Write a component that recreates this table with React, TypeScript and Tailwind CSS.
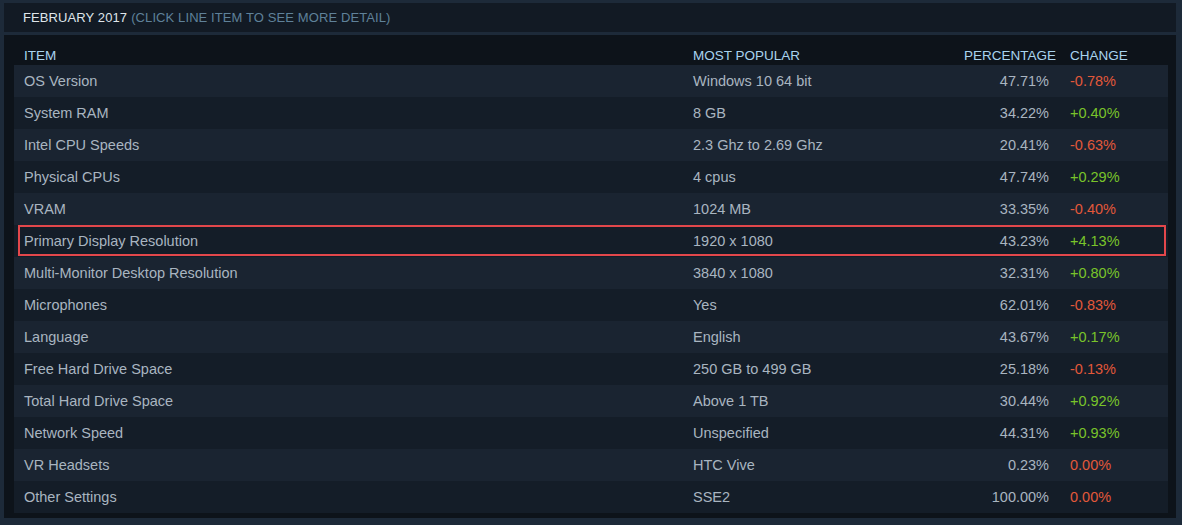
import React from "react";

type Row = {
  item: string;
  popular: string;
  pct: string;
  change: string;
  highlight?: boolean;
};

const rows: Row[] = [
  { item: "OS Version", popular: "Windows 10 64 bit", pct: "47.71%", change: "-0.78%" },
  { item: "System RAM", popular: "8 GB", pct: "34.22%", change: "+0.40%" },
  { item: "Intel CPU Speeds", popular: "2.3 Ghz to 2.69 Ghz", pct: "20.41%", change: "-0.63%" },
  { item: "Physical CPUs", popular: "4 cpus", pct: "47.74%", change: "+0.29%" },
  { item: "VRAM", popular: "1024 MB", pct: "33.35%", change: "-0.40%" },
  { item: "Primary Display Resolution", popular: "1920 x 1080", pct: "43.23%", change: "+4.13%", highlight: true },
  { item: "Multi-Monitor Desktop Resolution", popular: "3840 x 1080", pct: "32.31%", change: "+0.80%" },
  { item: "Microphones", popular: "Yes", pct: "62.01%", change: "-0.83%" },
  { item: "Language", popular: "English", pct: "43.67%", change: "+0.17%" },
  { item: "Free Hard Drive Space", popular: "250 GB to 499 GB", pct: "25.18%", change: "-0.13%" },
  { item: "Total Hard Drive Space", popular: "Above 1 TB", pct: "30.44%", change: "+0.92%" },
  { item: "Network Speed", popular: "Unspecified", pct: "44.31%", change: "+0.93%" },
  { item: "VR Headsets", popular: "HTC Vive", pct: "0.23%", change: "0.00%" },
  { item: "Other Settings", popular: "SSE2", pct: "100.00%", change: "0.00%" },
];

export default function App() {
  return (
    <div
      className="w-[1182px] h-[525px] bg-[#1d2a39] pl-[4px] pr-[6px] pt-[3px] pb-[7px] flex flex-col"
      style={{ fontFamily: '"Liberation Sans", Arial, sans-serif' }}
    >
      {/* title bar */}
      <div className="h-[29px] bg-[#121a24] flex items-center pl-[19px] text-[13px] tracking-[0.1px]">
        <span className="text-[#dfe5ea]">FEBRUARY 2017</span>
        <span className="text-[#5f8199] ml-[4px]">(CLICK LINE ITEM TO SEE MORE DETAIL)</span>
      </div>
      <div className="h-[3px]" />

      {/* table */}
      <div className="flex-1 bg-[#0d131a] pl-[10px] pr-[8px] pt-[10px]">
        <div className="h-[20px] flex items-center pt-[2px] text-[13.5px] text-[#a9d3ef]">
          <div className="w-[679px] pl-[10px]">ITEM</div>
          <div className="flex-1">MOST POPULAR</div>
          <div className="w-[120px] text-right pr-[1px]">PERCENTAGE</div>
          <div className="w-[111px] pl-[13px]">CHANGE</div>
        </div>
        {rows.map((r, i) => (
          <div
            key={r.item}
            className={
              "relative h-[32px] flex items-center pt-[2px] text-[14.5px] text-[#a9b5c0] " +
              (i % 2 === 0 ? "bg-[#1a2431]" : "bg-[#141d28]")
            }
          >
            <div className="w-[679px] pl-[10px]">{r.item}</div>
            <div className="flex-1">{r.popular}</div>
            <div className="w-[120px] text-right pr-[8px]">{r.pct}</div>
            <div
              className={
                "w-[111px] pl-[13px] " +
                (r.change.startsWith("+") ? "text-[#79c42a]" : "text-[#e2583a]")
              }
            >
              {r.change}
            </div>
            {r.highlight && (
              <div className="absolute left-[4px] right-[2px] top-0 bottom-[1px] border-2 border-[#e3474b]" />
            )}
          </div>
        ))}
      </div>
    </div>
  );
}
